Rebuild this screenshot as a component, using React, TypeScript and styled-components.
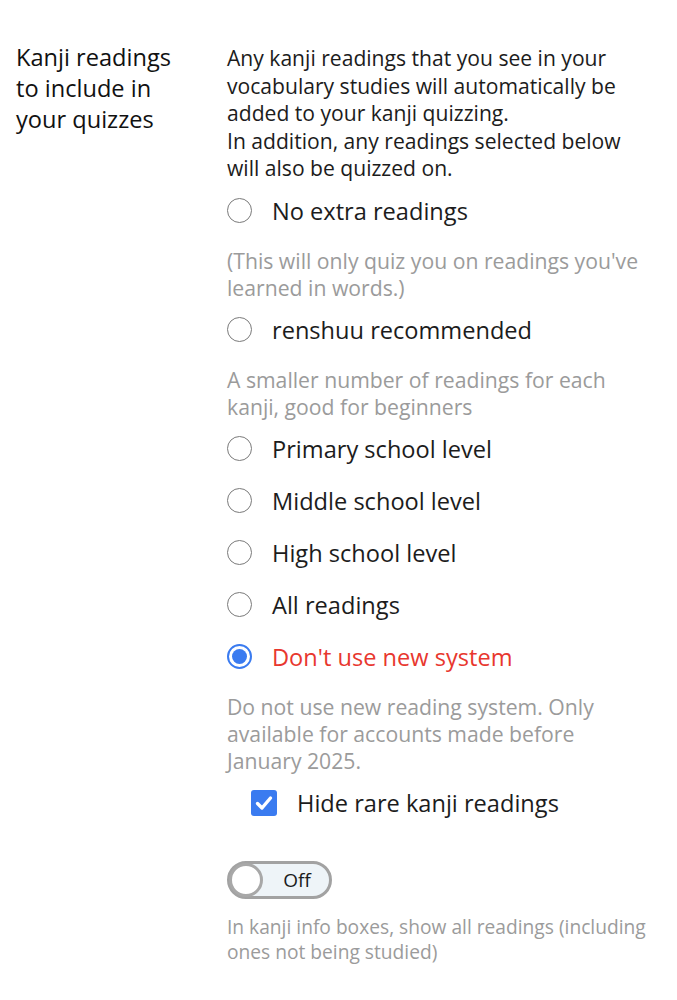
import React from 'react'
import styled, { createGlobalStyle } from 'styled-components'

const GlobalStyle = createGlobalStyle`
  body {
    margin: 0;
    background: #fff;
    font-family: "Open Sans", "Noto Sans", sans-serif;
    color: #1c1c1c;
  }
`

const Setting = styled.section`
  display: grid;
  grid-template-columns: 180px 423px;
  column-gap: 31px;
  padding: 42px 16px 30px 16px;
`

const Label = styled.div`
  font-size: 23.6px;
  line-height: 31px;
  color: #111;
`

const Body = styled.div`
  display: flex;
  flex-direction: column;
`

const Intro = styled.p`
  margin: 2px 0 3px;
  font-size: 21.1px;
  line-height: 27.5px;
  color: #1c1c1c;
`

const Option = styled.label<{ $indent?: number }>`
  display: flex;
  align-items: center;
  gap: 20px;
  padding: 11px 0 11px ${(p) => p.$indent || 0}px;
  font-size: 23.6px;
  line-height: 30px;
  cursor: pointer;
`

const OptionText = styled.span<{ $danger?: boolean }>`
  color: ${(p) => (p.$danger ? '#e8372e' : '#1c1c1c')};
`

const Radio = styled.input.attrs({ type: 'radio' })`
  appearance: none;
  margin: 0;
  width: 25px;
  height: 25px;
  flex: none;
  border-radius: 50%;
  border: 1.6px solid #7a7a7a;
  background: #fff;
  display: grid;
  place-items: center;
  &:checked {
    border: 2.2px solid #3a7bf0;
  }
  &:checked::after {
    content: '';
    width: 15px;
    height: 15px;
    border-radius: 50%;
    background: #3a7bf0;
  }
`

const Check = styled.span`
  width: 26px;
  height: 26px;
  flex: none;
  border-radius: 3px;
  background: #3a7bf0;
  display: grid;
  place-items: center;
`

const Note = styled.p<{ $tight?: boolean }>`
  margin: ${(p) => (p.$tight ? '15px 0 0' : '10px 0 2.5px')};
  font-size: ${(p) => (p.$tight ? '19.2px' : '21.2px')};
  line-height: ${(p) => (p.$tight ? '25px' : '27.3px')};
  color: #9b9b9b;
`

const Switch = styled.div`
  margin-top: 32px;
  width: 105px;
  height: 38px;
  box-sizing: border-box;
  border: 3px solid #a2a2a2;
  border-radius: 19px;
  background: #eef4f8;
  display: flex;
  align-items: center;
`

const Knob = styled.span`
  width: 34px;
  height: 34px;
  box-sizing: border-box;
  margin-left: -1px;
  border-radius: 50%;
  border: 3px solid #a8a8a8;
  background: #fff;
  flex: none;
`

const SwitchText = styled.span`
  flex: 1;
  text-align: center;
  font-size: 19px;
  line-height: 24px;
  color: #1c1c1c;
  padding-left: 2px;
`

const options = [
  { label: 'No extra readings', note: "(This will only quiz you on readings you've learned in words.)" },
  { label: 'renshuu recommended', note: 'A smaller number of readings for each kanji, good for beginners' },
  { label: 'Primary school level' },
  { label: 'Middle school level' },
  { label: 'High school level' },
  { label: 'All readings' },
  {
    label: "Don't use new system",
    note: 'Do not use new reading system. Only available for accounts made before January 2025.',
    danger: true,
  },
]

export default function App() {
  const [picked, setPicked] = React.useState(6)
  return (
    <>
      <GlobalStyle />
      <Setting>
        <Label>Kanji readings to include in your quizzes</Label>
        <Body>
          <Intro>
            Any kanji readings that you see in your vocabulary studies will automatically be added to your kanji
            quizzing.
            <br />
            In addition, any readings selected below will also be quizzed on.
          </Intro>
          {options.map((o, i) => (
            <React.Fragment key={o.label}>
              <Option>
                <Radio name="readings" checked={picked === i} onChange={() => setPicked(i)} />
                <OptionText $danger={o.danger}>{o.label}</OptionText>
              </Option>
              {o.note && <Note>{o.note}</Note>}
            </React.Fragment>
          ))}
          <Option $indent={24}>
            <Check>
              <svg width="20" height="20" viewBox="0 0 20 20">
                <path d="M3.5 10.5 L8 15 L16.5 5" fill="none" stroke="#fff" strokeWidth="3.4" strokeLinecap="round" strokeLinejoin="round" />
              </svg>
            </Check>
            <OptionText>Hide rare kanji readings</OptionText>
          </Option>
          <Switch>
            <Knob />
            <SwitchText>Off</SwitchText>
          </Switch>
          <Note $tight>In kanji info boxes, show all readings (including ones not being studied)</Note>
        </Body>
      </Setting>
    </>
  )
}
